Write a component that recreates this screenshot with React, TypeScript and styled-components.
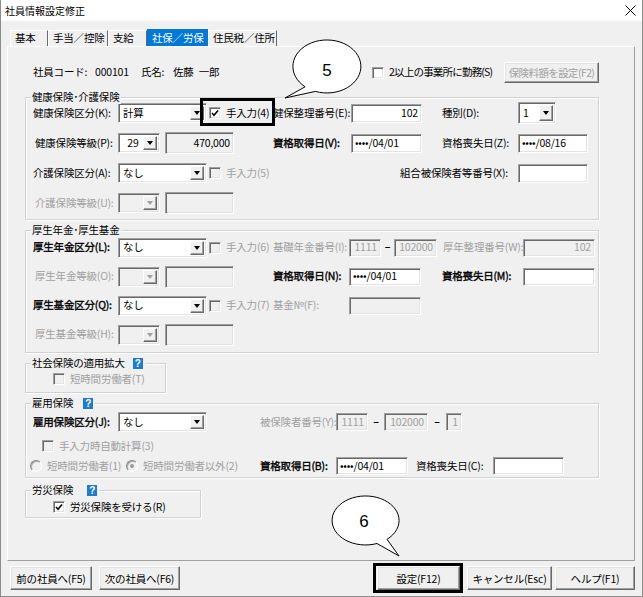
import React from "react";
import styled, { createGlobalStyle } from "styled-components";

const FONT = `"Noto Sans CJK JP", "Noto Sans", sans-serif`;
const GRAY = "#a0a0a0";

const GlobalStyle = createGlobalStyle`
  * { box-sizing: border-box; }
  html, body { margin: 0; padding: 0; background: #f0f0f0; }
  body { font-family: ${FONT}; font-size: 10.5px; letter-spacing: -0.2px; color: #000; line-height: 1.2; }
`;

const Root = styled.div`
  position: relative;
  width: 643px;
  height: 597px;
  overflow: hidden;
`;

const Window = styled.div`
  width: 643px;
  height: 597px;
  display: flex;
  flex-direction: column;
  background: #f0f0f0;
  border-left: 1px solid #8c8c8c;
  border-right: 1px solid #8c8c8c;
  border-bottom: 1px solid #8c8c8c;
`;

const TitleBar = styled.div`
  height: 21px;
  flex: none;
  background: #fff;
  display: flex;
  align-items: center;
  justify-content: space-between;
  padding: 0 6px 0 4px;
  font-size: 10px;
  letter-spacing: 0;
`;

const Body = styled.div`
  flex: 1;
  display: flex;
  flex-direction: column;
  padding: 8px 0 0 6px;
`;

const TabStrip = styled.div`
  display: flex;
  align-items: flex-end;
  height: 17px;
  margin-left: 3px;
`;

const Tab = styled.div<{ $w: number; $active?: boolean }>`
  width: ${(p) => p.$w}px;
  height: ${(p) => (p.$active ? 17 : 16)}px;
  display: flex;
  align-items: center;
  padding-left: 4px;
  white-space: nowrap;
  background: ${(p) => (p.$active ? "#0078d7" : "#f0f0f0")};
  color: ${(p) => (p.$active ? "#fff" : "#000")};
  border-left: 1px solid ${(p) => (p.$active ? "#0078d7" : "#fff")};
  border-top: 1px solid ${(p) => (p.$active ? "#0078d7" : "#fff")};
  border-right: 1px solid ${(p) => (p.$active ? "#0078d7" : "#696969")};
`;

const Panel = styled.div`
  width: 628px;
  height: 515px;
  flex: none;
  border: 1px solid;
  border-color: #fff #a0a0a0 #a0a0a0 #fff;
  padding: 15px 0 0 17px;
  display: flex;
  flex-direction: column;
`;

const Group = styled.div<{ $w: number; $mt: number; $pt: number; $pb: number }>`
  position: relative;
  flex: none;
  width: ${(p) => p.$w}px;
  margin-top: ${(p) => p.$mt}px;
  padding: ${(p) => p.$pt}px 0 ${(p) => p.$pb}px 0;
  border: 1px solid #d2d2d2;
  box-shadow: inset 1px 1px 0 #fff, 1px 1px 0 #fff;
  display: flex;
  flex-direction: column;
`;

const GroupTitle = styled.div`
  position: absolute;
  top: -8px;
  left: 5px;
  height: 14px;
  padding: 0 2px 0 1px;
  background: #f0f0f0;
  display: flex;
  align-items: center;
  white-space: nowrap;
`;

const HelpIcon = styled.span<{ $ml: number }>`
  width: 10px;
  height: 11px;
  margin-left: ${(p) => p.$ml}px;
  background: #1f7ad0;
  color: #fff;
  font: bold 10px/11px "Liberation Sans", sans-serif;
  letter-spacing: 0;
  text-align: center;
`;

const Row = styled.div<{ $h: number; $pl?: number; $mt?: number }>`
  display: flex;
  align-items: center;
  flex: none;
  height: ${(p) => p.$h}px;
  padding-left: ${(p) => p.$pl ?? 7}px;
  margin-top: ${(p) => p.$mt ?? 0}px;
`;

const Label = styled.span<{
  $w?: number;
  $dim?: boolean;
  $bold?: boolean;
  $right?: boolean;
  $pl?: number;
}>`
  flex: none;
  width: ${(p) => (p.$w ? `${p.$w}px` : "auto")};
  color: ${(p) => (p.$dim ? GRAY : "#000")};
  -webkit-text-stroke: ${(p) => (p.$bold ? "0.35px #000" : "0")};
  white-space: nowrap;
  text-align: ${(p) => (p.$right ? "right" : "left")};
  padding-left: ${(p) => p.$pl ?? 0}px;
  padding-right: ${(p) => (p.$right ? 10 : 0)}px;
`;

const Spacer = styled.span<{ $w: number }>`
  flex: none;
  width: ${(p) => p.$w}px;
`;

const Dash = styled.span<{ $w: number }>`
  flex: none;
  width: ${(p) => p.$w}px;
  text-align: center;
  font-weight: 700;
  color: #000;
`;

const Sunken = styled.div<{ $w: number; $h: number; $off?: boolean }>`
  flex: none;
  width: ${(p) => p.$w}px;
  height: ${(p) => p.$h}px;
  background: ${(p) => (p.$off ? "#f0f0f0" : "#fff")};
  border: 1px solid;
  border-color: #a0a0a0 #fff #fff #a0a0a0;
  box-shadow: inset 1px 1px 0 #696969, inset -1px -1px 0 #e3e3e3;
`;

const TextBox = styled(Sunken)<{ $right?: boolean; $dimText?: boolean }>`
  display: flex;
  align-items: center;
  justify-content: ${(p) => (p.$right ? "flex-end" : "flex-start")};
  padding: 0 3px 0 3px;
  color: ${(p) => (p.$dimText ? GRAY : "#000")};
  white-space: nowrap;
`;

const ComboBox = styled(Sunken)`
  display: flex;
  padding: 2px;
`;

const ComboValue = styled.span<{ $center?: boolean }>`
  flex: 1;
  display: flex;
  align-items: center;
  justify-content: ${(p) => (p.$center ? "center" : "flex-start")};
  padding-left: 2px;
  white-space: nowrap;
`;

const DropBtn = styled.span`
  width: 14px;
  flex: none;
  background: #f0f0f0;
  border: 1px solid;
  border-color: #fff #696969 #696969 #fff;
  box-shadow: inset -1px -1px 0 #a0a0a0;
  display: flex;
  align-items: center;
  justify-content: center;
`;

const Arrow = styled.span<{ $off?: boolean }>`
  width: 0;
  height: 0;
  border-left: 3.5px solid transparent;
  border-right: 3.5px solid transparent;
  border-top: 4px solid ${(p) => (p.$off ? GRAY : "#000")};
`;

const CheckWrap = styled.span<{ $w?: number; $dim?: boolean; $pl?: number; $tight?: boolean }>`
  flex: none;
  display: flex;
  align-items: center;
  gap: 5px;
  width: ${(p) => (p.$w ? `${p.$w}px` : "auto")};
  padding-left: ${(p) => p.$pl ?? 0}px;
  color: ${(p) => (p.$dim ? GRAY : "#000")};
  letter-spacing: ${(p) => (p.$tight ? "-0.8px" : "-0.2px")};
  white-space: nowrap;
`;

const Box = styled.span<{ $off?: boolean }>`
  width: 12px;
  height: 12px;
  flex: none;
  background: ${(p) => (p.$off ? "#f0f0f0" : "#fff")};
  border: 1px solid;
  border-color: #a0a0a0 #fff #fff #a0a0a0;
  box-shadow: inset 1px 1px 0 #696969, inset -1px -1px 0 #e3e3e3;
  display: flex;
  align-items: center;
  justify-content: center;
`;

const RadioCircle = styled.span<{ $checked?: boolean }>`
  width: 12px;
  height: 12px;
  flex: none;
  border-radius: 50%;
  background: #f0f0f0;
  border: 1px solid;
  border-color: #808080 #fff #fff #808080;
  box-shadow: inset 1px 1px 0 #b0b0b0;
  display: flex;
  align-items: center;
  justify-content: center;
  &::after {
    content: "";
    width: 4px;
    height: 4px;
    border-radius: 50%;
    background: ${(p) => (p.$checked ? "#9a9a9a" : "transparent")};
  }
`;

const Btn = styled.button<{ $w: number; $h?: number; $ml?: number; $dim?: boolean }>`
  flex: none;
  width: ${(p) => p.$w}px;
  height: ${(p) => p.$h ?? 24}px;
  margin-left: ${(p) => p.$ml ?? 0}px;
  padding: 0;
  font-family: ${FONT};
  font-size: 10.5px;
  letter-spacing: ${(p) => (p.$dim ? "-0.6px" : "-0.2px")};
  color: ${(p) => (p.$dim ? GRAY : "#000")};
  background: #f0f0f0;
  border: 1px solid;
  border-color: #fff #696969 #696969 #fff;
  box-shadow: inset -1px -1px 0 #a0a0a0, inset 1px 1px 0 #e3e3e3;
  white-space: nowrap;
`;

const InfoRow = styled.div`
  display: flex;
  align-items: center;
  height: 21px;
  padding-left: 8px;
`;

const BottomBar = styled.div`
  display: flex;
  align-items: flex-start;
  padding: 5px 0 0 3px;
`;

const Overlay = styled.svg`
  position: absolute;
  left: 0;
  top: 0;
  pointer-events: none;
`;

const Check = () => (
  <svg width="8" height="8" viewBox="0 0 8 8">
    <path d="M1 4 L3 6.2 L7 1.5" fill="none" stroke="#000" strokeWidth="1.6" />
  </svg>
);

const Combo: React.FC<{ w: number; h?: number; value?: string; off?: boolean; center?: boolean }> = ({
  w,
  h = 20,
  value = "",
  off,
  center,
}) => (
  <ComboBox $w={w} $h={h} $off={off}>
    <ComboValue $center={center}>{value}</ComboValue>
    <DropBtn>
      <Arrow $off={off} />
    </DropBtn>
  </ComboBox>
);

const CheckItem: React.FC<{
  label: string;
  w?: number;
  dim?: boolean;
  checked?: boolean;
  pl?: number;
  tight?: boolean;
}> = ({ label, w, dim, checked, pl, tight }) => (
  <CheckWrap $w={w} $dim={dim} $pl={pl} $tight={tight}>
    <Box $off={dim}>{checked && <Check />}</Box>
    {label}
  </CheckWrap>
);

const RadioItem: React.FC<{ label: string; w: number; checked?: boolean }> = ({ label, w, checked }) => (
  <CheckWrap $w={w} $dim>
    <RadioCircle $checked={checked} />
    {label}
  </CheckWrap>
);

const DOTS = "\u2022\u2022\u2022\u2022";

export default function App() {
  return (
    <Root>
      <GlobalStyle />
      <Window>
        <TitleBar>
          <span>社員情報設定修正</span>
          <svg width="11" height="11" viewBox="0 0 11 11">
            <path d="M0.5 0.5 L10.5 10.5 M10.5 0.5 L0.5 10.5" stroke="#000" strokeWidth="1" />
          </svg>
        </TitleBar>
        <Body>
          <TabStrip>
            <Tab $w={38}>基本</Tab>
            <Tab $w={60}>手当／控除</Tab>
            <Tab $w={39}>支給</Tab>
            <Tab $w={61} $active>
              社保／労保
            </Tab>
            <Tab $w={69}>住民税／住所</Tab>
          </TabStrip>
          <Panel>
            <InfoRow>
              <Label $w={62}>社員コード:</Label>
              <Label $w={46}>000101</Label>
              <Label $w={32}>氏名:</Label>
              <Label $w={199}>佐藤{"\u2002"}一郎</Label>
              <CheckItem w={132} tight label="2以上の事業所に勤務(S)" />
              <Btn $w={95} $h={21} $dim>
                保険料額を設定(F2)
              </Btn>
            </InfoRow>

            <Group $w={574} $mt={14} $pt={0} $pb={1}>
              <GroupTitle>健康保険･介護保険</GroupTitle>
              <Row $h={30}>
                <Label $w={85}>健康保険区分(K):</Label>
                <Combo w={89} value="計算" />
                <CheckItem w={66} pl={2} checked label="手入力(4)" />
                <Label $w={78}>健保整理番号(E):</Label>
                <TextBox $w={71} $h={19} $right>
                  102
                </TextBox>
                <Spacer $w={20} />
                <Label $w={76}>種別(D):</Label>
                <Combo w={38} h={22} value="1" />
              </Row>
              <Row $h={30}>
                <Label $w={85} $pl={2}>
                  健康保険等級(P):
                </Label>
                <Combo w={42} value="29" center />
                <Spacer $w={5} />
                <TextBox $w={69} $h={22} $off $right>
                  470,000
                </TextBox>
                <Spacer $w={39} />
                <Label $w={78} $bold>
                  資格取得日(V):
                </Label>
                <TextBox $w={71} $h={19}>
                  {DOTS}/04/01
                </TextBox>
                <Spacer $w={20} />
                <Label $w={76}>資格喪失日(Z):</Label>
                <TextBox $w={70} $h={19}>
                  {DOTS}/08/16
                </TextBox>
              </Row>
              <Row $h={30}>
                <Label $w={85}>介護保険区分(A):</Label>
                <Combo w={89} value="なし" />
                <CheckItem w={66} pl={2} dim label="手入力(5)" />
                <Label $w={245} $right>
                  組合被保険者等番号(X):
                </Label>
                <TextBox $w={70} $h={19} />
              </Row>
              <Row $h={30}>
                <Label $w={85} $pl={2} $dim>
                  介護保険等級(U):
                </Label>
                <Combo w={42} off />
                <Spacer $w={5} />
                <TextBox $w={69} $h={22} $off />
              </Row>
            </Group>

            <Group $w={574} $mt={10} $pt={2} $pb={3}>
              <GroupTitle>厚生年金･厚生基金</GroupTitle>
              <Row $h={29}>
                <Label $w={85} $bold>
                  厚生年金区分(L):
                </Label>
                <Combo w={89} value="なし" />
                <CheckItem w={66} pl={2} dim label="手入力(6)" />
                <Label $w={76} $dim>
                  基礎年金番号(I):
                </Label>
                <TextBox $w={32} $h={18} $off $right $dimText>
                  1111
                </TextBox>
                <Dash $w={13}>–</Dash>
                <TextBox $w={43} $h={18} $off $right $dimText>
                  102000
                </TextBox>
                <Spacer $w={6} />
                <Label $w={80} $dim>
                  厚年整理番号(W):
                </Label>
                <TextBox $w={72} $h={18} $off $right $dimText>
                  102
                </TextBox>
              </Row>
              <Row $h={29}>
                <Label $w={85} $pl={2} $dim>
                  厚生年金等級(O):
                </Label>
                <Combo w={42} off />
                <Spacer $w={5} />
                <TextBox $w={69} $h={22} $off />
                <Spacer $w={39} />
                <Label $w={76} $bold>
                  資格取得日(N):
                </Label>
                <TextBox $w={72} $h={18}>
                  {DOTS}/04/01
                </TextBox>
                <Spacer $w={21} />
                <Label $w={81} $bold>
                  資格喪失日(M):
                </Label>
                <TextBox $w={72} $h={18} />
              </Row>
              <Row $h={29}>
                <Label $w={85} $bold>
                  厚生基金区分(Q):
                </Label>
                <Combo w={89} value="なし" />
                <CheckItem w={66} pl={2} dim label="手入力(7)" />
                <Label $w={76} $dim>
                  基金№(F):
                </Label>
                <TextBox $w={72} $h={18} $off />
              </Row>
              <Row $h={29}>
                <Label $w={85} $pl={2} $dim>
                  厚生基金等級(H):
                </Label>
                <Combo w={42} off />
                <Spacer $w={5} />
                <TextBox $w={69} $h={22} $off />
              </Row>
            </Group>

            <Group $w={141} $mt={10} $pt={3} $pb={1}>
              <GroupTitle>
                社会保険の適用拡大
                <HelpIcon $ml={8}>?</HelpIcon>
              </GroupTitle>
              <Row $h={24} $pl={27}>
                <CheckItem dim label="短時間労働者(T)" />
              </Row>
            </Group>

            <Group $w={574} $mt={10} $pt={7} $pb={1}>
              <GroupTitle>
                雇用保険
                <HelpIcon $ml={10}>?</HelpIcon>
              </GroupTitle>
              <Row $h={22}>
                <Label $w={85} $bold>
                  雇用保険区分(J):
                </Label>
                <Combo w={89} value="なし" />
                <Spacer $w={53} />
                <Label $w={76} $dim>
                  被保険者番号(Y):
                </Label>
                <TextBox $w={32} $h={18} $off $right $dimText>
                  1111
                </TextBox>
                <Dash $w={16}>–</Dash>
                <TextBox $w={44} $h={18} $off $right $dimText>
                  102000
                </TextBox>
                <Dash $w={18}>–</Dash>
                <TextBox $w={16} $h={18} $off $right $dimText>
                  1
                </TextBox>
              </Row>
              <Row $h={20} $pl={16} $mt={3}>
                <CheckItem dim label="手入力時自動計算(3)" />
              </Row>
              <Row $h={20} $pl={4}>
                <RadioItem w={96} label="短時間労働者(1)" />
                <RadioItem w={134} checked label="短時間労働者以外(2)" />
                <Label $w={76} $bold>
                  資格取得日(B):
                </Label>
                <TextBox $w={72} $h={18}>
                  {DOTS}/04/01
                </TextBox>
                <Spacer $w={8} />
                <Label $w={77}>資格喪失日(C):</Label>
                <TextBox $w={71} $h={18} />
              </Row>
            </Group>

            <Group $w={176} $mt={12} $pt={6} $pb={0}>
              <GroupTitle>
                労災保険
                <HelpIcon $ml={14}>?</HelpIcon>
              </GroupTitle>
              <Row $h={20} $pl={27}>
                <CheckItem checked label="労災保険を受ける(R)" />
              </Row>
            </Group>
          </Panel>
          <BottomBar>
            <Btn $w={82}>前の社員へ(F5)</Btn>
            <Btn $w={81} $ml={7}>
              次の社員へ(F6)
            </Btn>
            <Btn $w={83} $ml={197}>
              設定(F12)
            </Btn>
            <Btn $w={85} $ml={7}>
              キャンセル(Esc)
            </Btn>
            <Btn $w={80} $ml={3}>
              ヘルプ(F1)
            </Btn>
          </BottomBar>
        </Body>
      </Window>

      <Overlay width={643} height={597} viewBox="0 0 643 597">
        <rect x={201.5} y={99.5} width={72} height={25} fill="none" stroke="#000" strokeWidth={3} />
        <rect x={374.5} y={564.5} width={87} height={27} fill="none" stroke="#000" strokeWidth={3} />
        <path
          d="M305.1 86.8 A34 26.5 0 1 1 315.4 91.4 L285 98 Z"
          fill="#fff"
          stroke="#000"
          strokeWidth={1}
        />
        <text x={327} y={76} fontSize={17} textAnchor="middle" fontFamily='"Liberation Sans", sans-serif'>
          5
        </text>
        <path
          d="M377 543.5 A33.5 24.5 0 1 1 387 539.3 L399 556 Z"
          fill="#fff"
          stroke="#000"
          strokeWidth={1}
        />
        <text x={364} y={527} fontSize={17} textAnchor="middle" fontFamily='"Liberation Sans", sans-serif'>
          6
        </text>
      </Overlay>
    </Root>
  );
}
